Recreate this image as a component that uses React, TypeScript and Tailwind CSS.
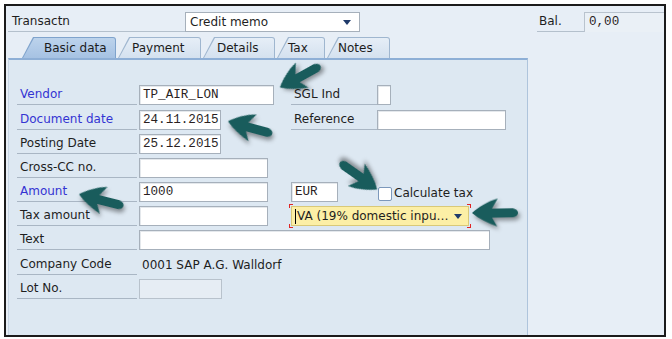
import React from 'react';

// SAP-style "Enter Vendor Invoice" header screen with annotation arrows.

const sans = "font-['DejaVu_Sans',Verdana,sans-serif]";
const mono = "font-['Liberation_Mono','Courier_New',monospace]";

function Label({ text, blue, w = 'w-[120px]' }: { text: string; blue?: boolean; w?: string }) {
  return (
    <div
      className={`${w} h-[20px] shrink-0 border-b border-[#a9b6c4] pl-[3px] text-[12px] leading-[19px] ${
        blue ? 'text-[#3434d2]' : 'text-[#1e1e1e]'
      }`}
    >
      {text}
    </div>
  );
}

function Field({ value, w, disabled }: { value?: string; w: string; disabled?: boolean }) {
  return (
    <div
      className={`${w} h-[20px] shrink-0 border border-[#a6b0bb] shadow-[inset_1px_1px_0_#e4e8ec] pl-[3px] ${mono} text-[12.6px] leading-[18px] text-[#2a1f1f] ${
        disabled ? 'bg-[#e6edf4] border-[#b8c2cc] shadow-none' : 'bg-white'
      }`}
    >
      {value}
    </div>
  );
}

function Tab({ label, w, pl, active }: { label: string; w: string; pl: string; active?: boolean }) {
  return (
    <div
      className={`${w} h-[21px] pl-px pt-px pr-px rounded-tr-[3px] [clip-path:polygon(11px_0,100%_0,100%_100%,0_100%)] ${
        active ? 'bg-[#7fa3cc]' : 'bg-[#9fb6cf]'
      }`}
    >
      <div
        className={`h-full ${pl} rounded-tr-[2px] flex items-center text-[12px] text-[#1c1c1c] [clip-path:polygon(11px_0,100%_0,100%_100%,0_100%)] ${
          active ? 'bg-gradient-to-b from-[#bcd3ec] to-[#a6c2e3]' : 'bg-gradient-to-b from-[#e6eef7] to-[#d4e1ef]'
        }`}
      >
        {label}
      </div>
    </div>
  );
}

function Arrow({ x, y, angle }: { x: number; y: number; angle: number }) {
  return (
    <svg
      className="pointer-events-none absolute drop-shadow-[2px_3px_2px_rgba(0,0,0,0.4)]"
      width="48"
      height="30"
      viewBox="0 0 48 30"
      style={{ left: x, top: y - 15, transform: `rotate(${angle}deg)`, transformOrigin: '0 15px' }}
    >
      <path
        d="M1 15 C8 9 16 4 27 1 L21 11 L40 11 C45 11 47 13.5 47 15.5 C47 18 45 20 40 20 L21 20 L26 29 C16 25 8 21 1 15 Z"
        fill="#195c5c"
      />
    </svg>
  );
}

function Row({ children, className = '' }: { children: React.ReactNode; className?: string }) {
  return <div className={`flex h-[24px] shrink-0 items-center ${className}`}>{children}</div>;
}

export default function App() {
  return (
    <div className={`relative w-[672px] h-[339px] bg-white pl-[4px] pt-[4px] ${sans}`}>
      <div className="flex h-[333px] w-[662px] flex-col border-2 border-[#1b1b1b] bg-[#e7eef6]">
        {/* Header */}
        <div className="mt-[6px] flex h-[20px] items-end">
          <div className="ml-[2px] h-[20px] w-[177px] border-b border-[#b4c0cc] pl-[4px] text-[12px] leading-[19px] text-[#1e1e1e]">
            Transactn
          </div>
          <div className="flex h-[20px] w-[175px] items-center justify-between border border-[#a6b0bb] bg-white pl-[4px] pr-[8px] text-[12px] text-[#1e1e1e]">
            <span>Credit memo</span>
            <span className="h-0 w-0 border-x-[4px] border-t-[5px] border-x-transparent border-t-[#1f3a6a]" />
          </div>
          <div className="ml-auto flex items-end">
            <div className="h-[20px] w-[47px] border-b border-[#b4c0cc] pl-[2px] text-[12px] leading-[19px] text-[#1e1e1e]">
              Bal.
            </div>
            <div className={`h-[20px] w-[80px] border-l border-t border-[#b9c3ce] bg-[#eaf0f6] pl-[4px] ${mono} text-[12.6px] leading-[19px] text-[#2a1f1f]`}>
              0,00
            </div>
          </div>
        </div>

        {/* Tabs */}
        <div className="mt-[5px] flex gap-[2px] pl-[16px]">
          <Tab label="Basic data" w="w-[94px]" pl="pl-[21px]" active />
          <Tab label="Payment" w="w-[83px]" pl="pl-[13px]" />
          <Tab label="Details" w="w-[72px]" pl="pl-[13px]" />
          <Tab label="Tax" w="w-[48px]" pl="pl-[10px]" />
          <Tab label="Notes" w="w-[63px]" pl="pl-[10px]" />
        </div>

        {/* Panel */}
        <div className="ml-[2px] flex w-[520px] flex-1 flex-col border-l border-r border-t-2 border-l-[#c8d6e5] border-r-[#aec4dc] border-t-[#8eafd6] bg-[#dde8f2] pt-[23px]">
          <Row>
            <div className="flex w-[282px] items-center gap-[2px] pl-[8px]">
              <Label text="Vendor" blue />
              <Field value="TP_AIR_LON" w="w-[135px]" />
            </div>
            <Label text="SGL Ind" w="w-[86px]" />
            <Field w="w-[14px]" />
          </Row>
          <Row className="mt-px">
            <div className="flex w-[282px] items-center gap-[2px] pl-[8px]">
              <Label text="Document date" blue />
              <Field value="24.11.2015" w="w-[82px]" />
            </div>
            <Label text="Reference" w="w-[86px]" />
            <Field w="w-[129px]" />
          </Row>
          <Row>
            <div className="flex w-[282px] items-center gap-[2px] pl-[8px]">
              <Label text="Posting Date" />
              <Field value="25.12.2015" w="w-[82px]" />
            </div>
          </Row>
          <Row>
            <div className="flex w-[282px] items-center gap-[2px] pl-[8px]">
              <Label text="Cross-CC no." />
              <Field w="w-[129px]" />
            </div>
          </Row>
          <Row>
            <div className="flex w-[282px] items-center gap-[2px] pl-[8px]">
              <Label text="Amount" blue />
              <Field value="1000" w="w-[129px]" />
            </div>
            <Field value="EUR" w="w-[47px]" />
            <span className="ml-[40px] mt-[3px] h-[14px] w-[14px] rounded-[2px] border border-[#7c98bb] bg-white" />
            <span className="ml-[2px] mt-[2px] text-[12px] text-[#1e1e1e]">Calculate tax</span>
          </Row>
          <Row>
            <div className="flex w-[282px] items-center gap-[2px] pl-[8px]">
              <Label text="Tax amount" />
              <Field w="w-[129px]" />
            </div>
            <div className="relative">
              <div className="flex h-[20px] w-[178px] items-center justify-between border border-[#d9c978] bg-[#fcefa6] pl-[3px] pr-[6px] text-[12px] text-[#1e1e1e]">
                <span className="border-l border-black pl-px leading-[15px]">VA (19% domestic inpu…</span>
                <span className="h-0 w-0 border-x-[4px] border-t-[5px] border-x-transparent border-t-[#1f3a6a]" />
              </div>
              <span className="absolute -left-[2px] -top-[2px] h-[4px] w-[4px] border-l border-t border-[#e02626]" />
              <span className="absolute -right-[2px] -top-[2px] h-[4px] w-[4px] border-r border-t border-[#e02626]" />
              <span className="absolute -bottom-[2px] -left-[2px] h-[4px] w-[4px] border-b border-l border-[#e02626]" />
              <span className="absolute -bottom-[2px] -right-[2px] h-[4px] w-[4px] border-b border-r border-[#e02626]" />
            </div>
          </Row>
          <Row>
            <div className="flex items-center gap-[2px] pl-[8px]">
              <Label text="Text" />
              <Field w="w-[351px]" />
            </div>
          </Row>
          <Row className="mt-px">
            <div className="flex items-center gap-[2px] pl-[8px]">
              <Label text="Company Code" />
              <span className="pl-[3px] text-[12px] text-[#1e1e1e]">0001 SAP A.G. Walldorf</span>
            </div>
          </Row>
          <Row>
            <div className="flex items-center gap-[2px] pl-[8px]">
              <Label text="Lot No." />
              <Field w="w-[83px]" disabled />
            </div>
          </Row>
        </div>
      </div>

      {/* Annotation arrows */}
      <Arrow x={279} y={88} angle={-29} />
      <Arrow x={227} y={121} angle={15} />
      <Arrow x={78} y={194} angle={14} />
      <Arrow x={378} y={190} angle={-145} />
      <Arrow x={471} y={213} angle={-1} />
    </div>
  );
}
